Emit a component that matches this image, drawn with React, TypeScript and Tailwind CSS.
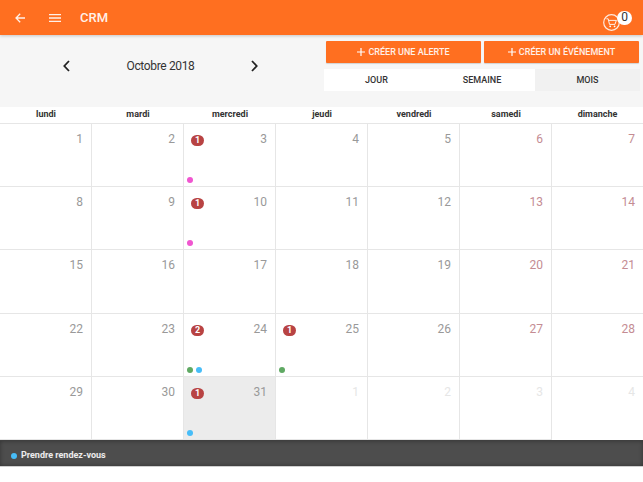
import React from "react";

type Cell = { d: number; badge?: number; dots?: string[]; muted?: boolean; today?: boolean };

const PINK = "bg-[#f056d0]";
const GREEN = "bg-[#5fa963]";
const BLUE = "bg-[#47bdf8]";

const cells: Cell[] = [
  { d: 1 }, { d: 2 }, { d: 3, badge: 1, dots: [PINK] }, { d: 4 }, { d: 5 }, { d: 6 }, { d: 7 },
  { d: 8 }, { d: 9 }, { d: 10, badge: 1, dots: [PINK] }, { d: 11 }, { d: 12 }, { d: 13 }, { d: 14 },
  { d: 15 }, { d: 16 }, { d: 17 }, { d: 18 }, { d: 19 }, { d: 20 }, { d: 21 },
  { d: 22 }, { d: 23 }, { d: 24, badge: 2, dots: [GREEN, BLUE] }, { d: 25, badge: 1, dots: [GREEN] }, { d: 26 }, { d: 27 }, { d: 28 },
  { d: 29 }, { d: 30 }, { d: 31, badge: 1, dots: [BLUE], today: true }, { d: 1, muted: true }, { d: 2, muted: true }, { d: 3, muted: true }, { d: 4, muted: true },
];

const days = ["lundi", "mardi", "mercredi", "jeudi", "vendredi", "samedi", "dimanche"];

function Plus() {
  return (
    <svg width="8" height="8" viewBox="0 0 8 8" className="shrink-0">
      <path d="M4 0v8M0 4h8" stroke="white" strokeWidth="1.2" fill="none" />
    </svg>
  );
}

function Day({ c, i }: { c: Cell; i: number }) {
  const weekend = i % 7 >= 5;
  const color = c.muted ? "text-[#e6e6e6]" : weekend ? "text-[#c48c93]" : "text-[#999999]";
  const lastCol = i % 7 === 6;
  return (
    <div
      className={`relative border-b border-[#e6e6e6] ${lastCol ? "" : "border-r"} ${c.today ? "bg-[#ececec]" : "bg-white"} last:border-b-0`}
    >
      <div className="flex items-start justify-between pt-[8px] pr-[8px] pl-[7px]">
        <div className="h-[11px] mt-[3px]">
          {c.badge ? (
            <div className="w-[13px] h-[11px] rounded-full bg-[#b84343] text-white text-[9px] font-bold leading-[11px] text-center">
              {c.badge}
            </div>
          ) : null}
        </div>
        <span className={`text-[12px] leading-[14px] ${color}`}>{c.d}</span>
      </div>
      {c.dots ? (
        <div className="absolute left-[3px] bottom-[3px] flex gap-[3px]">
          {c.dots.map((dot, k) => (
            <span key={k} className={`block w-[6px] h-[6px] rounded-full ${dot}`} />
          ))}
        </div>
      ) : null}
    </div>
  );
}

export default function App() {
  return (
    <div className="w-[643px] h-[482px] bg-white overflow-hidden flex flex-col font-['Roboto',sans-serif]">
      <header className="relative z-10 h-[35px] shrink-0 bg-[#ff6f20] shadow-[0_1px_3px_rgba(0,0,0,0.2)] flex items-center text-white">
        <svg width="10" height="10" viewBox="0 0 10 10" className="ml-[15px] mt-[1px]">
          <path d="M10 5H1.2M5.2 .8L1 5l4.2 4.2" stroke="#fff" strokeOpacity="0.9" strokeWidth="1.3" fill="none" />
        </svg>
        <svg width="12" height="8" viewBox="0 0 12 8" className="ml-[24px] mt-[1px]">
          <path d="M0 .7h12M0 4h12M0 7.3h12" stroke="#fff" strokeOpacity="0.9" strokeWidth="1.3" fill="none" />
        </svg>
        <span className="ml-[19px] text-[13px] font-medium opacity-90">CRM</span>
        <div className="relative ml-auto mr-[11px] w-[29px] h-[24px]">
          <svg width="17" height="17" viewBox="0 0 17 17" className="absolute left-0 top-[8px]">
            <circle cx="8.5" cy="8.5" r="7.8" stroke="#fff" strokeOpacity="0.85" strokeWidth="1.2" fill="none" />
            <path d="M3.4 4.8h1.8l1.3 5.6h5.4L13.4 6.4H5.6" stroke="#fff" strokeOpacity="0.9" strokeWidth="1" fill="none" />
            <circle cx="7.2" cy="12.3" r="0.9" fill="#fff" />
            <circle cx="11.6" cy="12.3" r="0.9" fill="#fff" />
          </svg>
          <div className="absolute right-0 top-[5px] w-[15px] h-[14px] rounded-full bg-white text-[#333] text-[12px] leading-[13px] text-center">
            0
          </div>
        </div>
      </header>

      <section className="h-[72px] shrink-0 bg-[#f6f6f6] flex">
        <div className="w-[324px] h-full pt-[24px] pl-[63px]">
          <div className="w-[195px] flex items-center justify-between">
            <svg width="7" height="12" viewBox="0 0 7 12">
              <path d="M6 1L1.3 6 6 11" stroke="#222" strokeWidth="1.8" fill="none" />
            </svg>
            <span className="text-[12px] tracking-[-0.35px] text-[#333] leading-[14px]">Octobre 2018</span>
            <svg width="7" height="12" viewBox="0 0 7 12">
              <path d="M1 1l4.7 5L1 11" stroke="#222" strokeWidth="1.8" fill="none" />
            </svg>
          </div>
        </div>
        <div className="flex-1 flex flex-col pt-[6px]">
          <div className="flex gap-[3px] pl-[2px] pr-[4px]">
            <button className="w-[155px] h-[22px] bg-[#ff6f20] rounded-[1px] flex items-center justify-center gap-[3px] text-white/90 text-[9px] font-medium shadow-[0_1px_1px_rgba(0,0,0,0.15)]">
              <Plus />
              <span className="mt-[1px]">CRÉER UNE ALERTE</span>
            </button>
            <button className="w-[155px] h-[22px] bg-[#ff6f20] rounded-[1px] flex items-center justify-center gap-[3px] text-white/90 text-[9px] font-medium shadow-[0_1px_1px_rgba(0,0,0,0.15)]">
              <Plus />
              <span className="mt-[1px]">CRÉER UN ÉVÉNEMENT</span>
            </button>
          </div>
          <div className="flex w-[316px] h-[22px] mt-[6px] bg-white text-[9px] font-medium text-[#333]">
            <div className="w-[105px] flex items-center justify-center pt-[1px]">JOUR</div>
            <div className="w-[106px] flex items-center justify-center pt-[1px]">SEMAINE</div>
            <div className="w-[105px] flex items-center justify-center pt-[1px] bg-[#f1f1f1]">MOIS</div>
          </div>
        </div>
      </section>

      <div className="h-[17px] shrink-0 grid grid-cols-[92px_92px_92px_92px_92px_92px_91px] border-b border-[#e6e6e6] bg-white">
        {days.map((d) => (
          <div key={d} className="text-center text-[9px] font-bold leading-[15px] text-[#333]">
            {d}
          </div>
        ))}
      </div>

      <div className="h-[316px] shrink-0 grid grid-cols-[92px_92px_92px_92px_92px_92px_91px] grid-rows-[63px_63px_64px_63px_63px]">
        {cells.map((c, i) => (
          <Day key={i} c={c} i={i} />
        ))}
      </div>

      <footer className="h-[27px] shrink-0 bg-[#4d4d4d] border-t border-[#3f3f3f] border-b-[#cfcfcf] border-b shadow-[inset_0_0_4px_rgba(0,0,0,0.35)] flex items-center pl-[11px] pt-[4px] gap-[4px]">
        <span className={`block w-[6px] h-[6px] rounded-full ${BLUE}`} />
        <span className="text-white/90 text-[9px] font-bold">Prendre rendez-vous</span>
      </footer>
    </div>
  );
}
